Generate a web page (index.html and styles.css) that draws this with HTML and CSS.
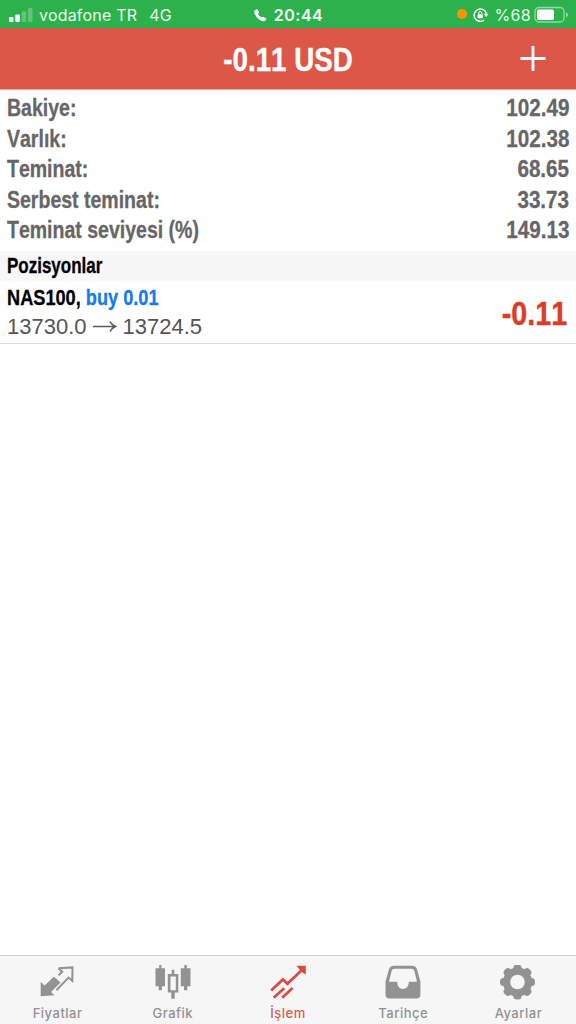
FILE: index.html
```html
<!DOCTYPE html>
<html lang="tr">
<head>
<meta charset="utf-8">
<title>İşlem</title>
<link rel="stylesheet" href="styles.css">
</head>
<body>
<div class="app">
  <div class="status">
    <div class="status-left">
      <svg class="signal" width="24" height="15" viewBox="0 0 24 15" fill="#fff"><rect x="0" y="9" width="4.5" height="5" rx="1"/><rect x="6.3" y="6.5" width="4.5" height="7.5" rx="1"/><g opacity=".25"><rect x="12.7" y="3.5" width="4.5" height="10.5" rx="1"/><rect x="19" y="0" width="4.5" height="14" rx="1"/></g></svg>
      <span class="carrier">vodafone TR</span><span class="network">4G</span>
    </div>
    <div class="clock">
      <svg width="13" height="13" viewBox="0 0 13 13" fill="#fff"><path d="M1 1.2 2.7.3Q3.3.1 3.7.8L4.8 3Q5.2 3.8 4.4 4.3L3.8 4.8Q5 7.2 7.8 8.6L8.6 7.9Q9.1 7.5 9.8 7.9L12 9.4Q12.7 9.9 12.1 10.6L10.8 12Q9.6 12.8 7.4 11.8Q2.4 9.6.5 4Q-.2 2 1 1.2Z"/></svg>
      <span>20:44</span>
    </div>
    <div class="status-right">
      <span class="dot"></span>
      <svg class="lock" width="16" height="16" viewBox="0 0 16 16" fill="none" stroke="#fff" stroke-width="1.4"><path d="M11 13.2A6.2 6.2 0 1 1 13.4 6.8"/><path d="M10.8 6.8h4.8l-2.4 3.2z" fill="#fff" stroke="none"/><rect x="4.6" y="7.2" width="5.2" height="4" rx=".6" fill="#fff" stroke="none"/><path d="M5.7 7.4V6a1.5 1.5 0 0 1 3 0v1.4" stroke-width="1"/></svg>
      <span class="percent">%68</span>
      <svg class="battery" width="35" height="18" viewBox="0 0 35 18"><rect x="1" y="1.5" width="29" height="14.5" rx="4" fill="none" stroke="#fff" stroke-opacity=".5" stroke-width="1.3"/><rect x="3" y="3.6" width="17" height="10.3" rx="2" fill="#fff"/><path d="M32 6.2q2 .8 2 2.6t-2 2.6z" fill="#fff" fill-opacity=".5"/></svg>
    </div>
  </div>
  <header class="header">
    <h1 class="title">-0.11 USD</h1>
    <svg class="add" width="26" height="26" viewBox="0 0 26 26" stroke="#fff" stroke-width="2.8"><path d="M.5 12.5h25M13 0v25"/></svg>
  </header>
  <section class="summary">
    <div class="row"><span class="label">Bakiye:</span><span class="value">102.49</span></div>
    <div class="row"><span class="label">Varlık:</span><span class="value">102.38</span></div>
    <div class="row"><span class="label">Teminat:</span><span class="value">68.65</span></div>
    <div class="row"><span class="label">Serbest teminat:</span><span class="value">33.73</span></div>
    <div class="row"><span class="label">Teminat seviyesi (%)</span><span class="value">149.13</span></div>
  </section>
  <h2 class="section-title"><span>Pozisyonlar</span></h2>
  <section class="position">
    <div>
      <div class="symbol">NAS100, <span class="side">buy 0.01</span></div>
      <div class="prices"><span>13730.0</span><svg width="24" height="12" viewBox="0 0 24 12" fill="none" stroke="#5a5a5a" stroke-width="1.5"><path d="M0 5.5h22M17 .7Q19 4.3 22.6 5.5Q19 6.7 17 10.3"/></svg><span>13724.5</span></div>
    </div>
    <div class="profit">-0.11</div>
  </section>
  <nav class="tabs">
    <div class="tab">
      <svg width="36" height="36" viewBox="0 0 36 36"><path d="M.7 16.8 4.5 20.4 14 11.8 20.5 17.6 11 26.9 14.5 30.2.7 31.2Z" fill="#929292"/><path d="M18.5 3.3 32.5 2.4 32.3 15.8 28.5 12.6 16.4 25.2M18.5 3.3 22.2 6.8 18.5 10.2" fill="none" stroke="#929292" stroke-width="2"/></svg>
      <span>Fiyatlar</span>
    </div>
    <div class="tab">
      <svg width="36" height="36" viewBox="0 0 36 36" fill="#929292"><path d="M4.2 0h2.2v3.3H10v18H6.9v3.9H3.7v-3.9H.5v-18h3.7zM29.3 0h2.5v3.3h3.7v18h-3.2v3.9H29v-3.9h-3.2v-18h3.5z"/><path fill-rule="evenodd" d="M16.7 4.8h2.6v4.3h4v18.5h-3.6v6.2h-3.4v-6.2h-3.5V9.1h3.9zM15.5 11.5v13.7h5.3V11.5z"/></svg>
      <span>Grafik</span>
    </div>
    <div class="tab active">
      <svg width="36" height="36" viewBox="0 0 36 36" fill="none" stroke="#d94a43" stroke-width="2.7"><path d="M1.2 25.5 12.9 14.4 17.4 18.8 33 4M3.7 32.7 14.2 23.3M12.2 32.7 22.5 23"/><path d="M26.5.8h9.3v8.8l-3.4-2.2-3.3-3.5z" fill="#d94a43" stroke="none"/></svg>
      <span>İşlem</span>
    </div>
    <div class="tab">
      <svg width="36" height="36" viewBox="0 0 36 36"><path fill="#929292" fill-rule="evenodd" d="M9 .8H27Q31 .8 32.2 5L35.4 16.5V29.5Q35.4 33.5 31.5 33.5H4.5Q.5 33.5.5 29.5V16.5L3.8 5Q5 .8 9 .8ZM9.5 3.7Q7.2 3.7 6.6 6L4 16.8H12.2C12.2 26.4 23.8 26.4 23.8 16.8H32L29.4 6Q28.7 3.7 26.5 3.7Z"/></svg>
      <span>Tarihçe</span>
    </div>
    <div class="tab">
      <svg width="36" height="36" viewBox="0 0 36 36"><g fill="#929292"><circle cx="17.5" cy="17" r="14.6"/><rect id="tooth" x="13.4" y="-.5" width="8.2" height="35" rx="3.5"/><use href="#tooth" transform="rotate(45 17.5 17)"/><use href="#tooth" transform="rotate(90 17.5 17)"/><use href="#tooth" transform="rotate(135 17.5 17)"/></g><circle cx="17.5" cy="17" r="7.3" fill="#f6f6f6"/></svg>
      <span>Ayarlar</span>
    </div>
  </nav>
</div>
</body>
</html>
```

FILE: styles.css
```css
* { box-sizing: border-box; }
body { margin: 0; background: #fff; font-family: "Liberation Sans", Arial, sans-serif; font-kerning: none; }
svg { display: block; flex: none; }
.app { height: 1024px; display: flex; flex-direction: column; overflow: hidden; }

.status { height: 28px; flex: none; display: grid; grid-template-columns: 1fr auto 1fr; align-items: center; background: #2db14d; color: #e9fbe9; font: 16px/28px Inter, sans-serif; padding: 2px 8px 0 9px; white-space: nowrap; }
.status-left, .status-right, .clock { display: flex; align-items: center; height: 26px; }
.carrier { margin-left: 6px; letter-spacing: .2px; }
.network { margin-left: 12px; letter-spacing: .2px; }
.clock { gap: 7px; font-weight: 600; letter-spacing: .5px; color: #f1fff1; }
.status-right { justify-content: flex-end; margin-right: -1px; }
.dot { width: 10px; height: 10px; border-radius: 50%; background: #ff9500; margin: 0 6px 2px 0; }
.percent { margin: 0 3px 0 6px; letter-spacing: .3px; }

.header { height: 62px; flex: none; display: grid; grid-template-columns: 1fr auto 1fr; align-items: center; background: #dd5748; border-bottom: 1px solid #e9a69b; }
.title { grid-column: 2; width: 130px; margin: 0; display: flex; justify-content: center; color: #fff; font-size: 34px; line-height: 62px; white-space: nowrap; transform: scaleX(.815); -webkit-text-stroke: .4px; }
.add { justify-self: end; margin-right: 30px; }

.summary { height: 161px; flex: none; padding: 3px 7px 0; color: #666; font-weight: 700; font-size: 24px; line-height: 30.6px; -webkit-text-stroke: .3px; }
.row { display: flex; justify-content: space-between; height: 30.6px; }
.label { transform: scaleX(.813); transform-origin: left; white-space: nowrap; }
.value { transform: scaleX(.86); transform-origin: right; }

.section-title { height: 30px; flex: none; margin: 0; padding-left: 7px; background: #f7f7f7; font-size: 21.5px; line-height: 31px; -webkit-text-stroke: .3px; }
.section-title span { display: inline-block; transform: scaleX(.79); transform-origin: left; }

.position { height: 63px; flex: none; display: flex; justify-content: space-between; padding: 0 9px 0 7px; border-bottom: 1px solid #dedede; }
.symbol { height: 31px; font-size: 22.5px; font-weight: 700; line-height: 33px; transform: scaleX(.808); transform-origin: left; white-space: nowrap; -webkit-text-stroke: .3px; }
.side { color: #147bea; }
.prices { display: flex; align-items: center; gap: 6px; color: #555; font-size: 22px; line-height: 29px; }
.profit { color: #de3b26; font-size: 33px; font-weight: 700; line-height: 66px; transform: scaleX(.87); transform-origin: right; -webkit-text-stroke: .4px; }

.tabs { height: 69px; flex: none; margin-top: auto; display: grid; grid-template-columns: repeat(5, 1fr); background: #f6f6f6; border-top: 1px solid #cfcfcf; color: #929292; font: 500 13px/17px Inter, sans-serif; letter-spacing: .5px; }
.tab { display: flex; flex-direction: column; align-items: center; padding-top: 9px; gap: 4px; }
.active { color: #d85b55; }
```
